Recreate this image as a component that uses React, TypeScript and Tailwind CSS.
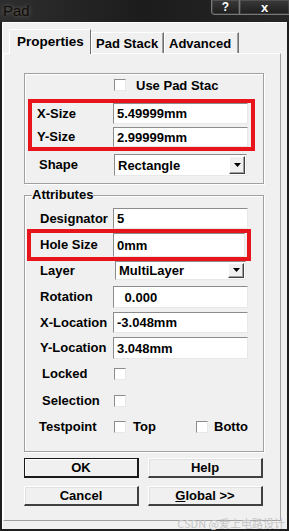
import React from "react";

function Field({ value, className = "" }: { value: string; className?: string }) {
  return (
    <div
      className={`h-full bg-white border-t border-l border-[#8c8c8c] border-r border-b border-r-[#e8e8e8] border-b-[#e8e8e8] flex items-center pl-[3px] whitespace-pre leading-none ${className}`}
    >
      {value}
    </div>
  );
}

function Combo({ value, className = "" }: { value: string; className?: string }) {
  return (
    <div
      className={`h-full bg-white border-t border-l border-[#8c8c8c] border-r border-b border-r-[#e8e8e8] border-b-[#e8e8e8] flex items-center ${className}`}
    >
      <span className="flex-1 pl-[3px] leading-none">{value}</span>
      <div className="w-[16px] self-stretch my-[1px] mr-[1px] bg-[#f0f0f0] border-t border-l border-white border-r border-b border-r-[#404040] border-b-[#404040] shadow-[inset_-1px_-1px_0_#a0a0a0] flex items-center justify-center">
        <svg width="7" height="5" viewBox="0 0 7 5">
          <path d="M0 0h7L3.5 4z" fill="#000" />
        </svg>
      </div>
    </div>
  );
}

function Check() {
  return (
    <div className="w-[12px] h-[12px] shrink-0 bg-white border-t border-l border-[#8c8c8c] border-r border-b border-r-[#e8e8e8] border-b-[#e8e8e8]" />
  );
}

function Btn({ children, main = false }: { children: React.ReactNode; main?: boolean }) {
  return (
    <div
      className={`w-[115px] h-[20px] flex items-center justify-center bg-[#f0f0f0] leading-none ${
        main
          ? "border border-[#1a1a1a] border-r-2 border-b-2 shadow-[inset_1px_1px_0_#fff]"
          : "border-t border-l border-white border-r-2 border-b-2 border-r-[#404040] border-b-[#404040] shadow-[inset_1px_1px_0_#e0e0e0]"
      }`}
    >
      {children}
    </div>
  );
}

export default function App() {
  return (
    <div className="w-[289px] h-[531px] bg-[#1e1e1e] relative overflow-hidden font-['Liberation_Sans',Arial,sans-serif] text-[13px] font-bold text-black">
      {/* title bar */}
      <div className="h-[22px] flex items-start justify-between bg-gradient-to-r from-[#2e2e2e] via-[#1c1c1c] to-[#262626]">
        <span className="ml-[3px] mt-[2px] text-[15px] font-normal text-[#140c06] leading-[17px] [text-shadow:0_0_5px_rgba(255,255,255,0.35)] font-['Liberation_Sans',sans-serif]">
          Pad
        </span>
        <div className="flex h-[15px]">
          <div className="w-[29px] h-full border border-t-0 border-[#777] rounded-bl-[4px] bg-gradient-to-b from-[#3a3a3a] to-[#1e1e1e] shadow-[inset_0_0_0_1px_rgba(255,255,255,0.12)] flex items-center justify-center text-white text-[12px] leading-[12px]">
            ?
          </div>
          <div className="w-[49px] h-full border-b border-[#777] bg-gradient-to-b from-[#3a3a3a] to-[#1e1e1e] shadow-[inset_0_0_0_1px_rgba(255,255,255,0.12)] flex items-center justify-center text-white text-[13px] leading-[13px]">
            x
          </div>
        </div>
      </div>

      {/* client */}
      <div className="mx-[2px] h-[507px] bg-[#f0f0f0] border-t border-l border-white flex flex-col">
        {/* tabs */}
        <div className="mt-[6px] h-[24px] flex items-end pl-[6px]">
          <div className="w-[82px] h-[25px] -mb-px relative z-10 bg-[#f0f0f0] border-t border-l border-white border-r border-r-[#707070] rounded-tl-[2px] flex items-start pt-[5px] pl-[7px] text-[13.5px] leading-[13px]">
            Properties
          </div>
          <div className="w-[73px] h-[21px] bg-[#f0f0f0] border-t border-l border-white border-r border-r-[#707070] shadow-[inset_-1px_0_0_#a0a0a0] flex items-center pl-[4px] leading-none">
            Pad Stack
          </div>
          <div className="w-[75px] h-[21px] bg-[#f0f0f0] border-t border-l border-white border-r border-r-[#707070] shadow-[inset_-1px_0_0_#a0a0a0] flex items-center pl-[4px] leading-none">
            Advanced
          </div>
        </div>

        {/* panel */}
        <div className="w-[278px] h-[468px] border-t border-l border-white border-r border-b border-r-[#a0a0a0] border-b-[#a0a0a0] flex flex-col">
          {/* group 1 */}
          <div className="mt-[19px] ml-[20px] w-[240px] h-[111px] border border-[#a0a0a0] shadow-[inset_1px_1px_0_#fff,1px_1px_0_#fff] flex flex-col">
            <div className="mt-[5px] h-[12px] flex items-center">
              <div className="ml-[89px]">
                <Check />
              </div>
              <span className="ml-[10px] whitespace-nowrap leading-[15px]">Use Pad Stac</span>
            </div>
            <div className="mt-[8px] ml-[3px] w-[227px] h-[52px] border-4 border-[#e8141c] flex flex-col">
              <div className="h-[21px] flex items-center">
                <span className="pl-[5px] w-[81px]">X-Size</span>
                <Field value="5.49999mm" className="w-[135px]" />
              </div>
              <div className="mt-[3px] h-[20px] flex items-center">
                <span className="pl-[5px] w-[81px]">Y-Size</span>
                <Field value="2.99999mm" className="w-[135px]" />
              </div>
            </div>
            <div className="mt-[3px] h-[22px] flex items-center">
              <span className="ml-[14px] w-[75px]">Shape</span>
              <Combo value="Rectangle" className="w-[133px]" />
            </div>
          </div>

          {/* group 2 */}
          <div className="mt-[11px] ml-[20px] w-[240px] h-[257px] border border-[#a0a0a0] shadow-[inset_1px_1px_0_#fff,1px_1px_0_#fff] flex flex-col">
            <span className="-mt-[9px] ml-[7px] self-start bg-[#f0f0f0] h-[15px] leading-[15px]">Attributes</span>
            <div className="mt-[6px] h-[21px] flex items-center">
              <span className="ml-[15px] w-[73px]">Designator</span>
              <Field value="5" className="w-[135px]" />
            </div>
            <div className="ml-[2px] w-[224px] h-[32px] border-4 border-[#e8141c] flex items-center">
              <span className="pl-[9px] w-[82px]">Hole Size</span>
              <Field value="0mm" className="w-[132px] h-[23px]" />
            </div>
            <div className="h-[19px] flex items-center">
              <span className="ml-[15px] w-[75px]">Layer</span>
              <Combo value="MultiLayer" className="w-[131px]" />
            </div>
            <div className="mt-[6px] h-[22px] flex items-center">
              <span className="ml-[15px] w-[73px]">Rotation</span>
              <Field value=" 0.000" className="w-[135px] pl-[7px]" />
            </div>
            <div className="mt-[4px] h-[21px] flex items-center">
              <span className="ml-[15px] w-[73px]">X-Location</span>
              <Field value="-3.048mm" className="w-[135px]" />
            </div>
            <div className="mt-[4px] h-[22px] flex items-center">
              <span className="ml-[15px] w-[73px]">Y-Location</span>
              <Field value="3.048mm" className="w-[135px]" />
            </div>
            <div className="mt-[9px] h-[12px] flex items-center">
              <span className="ml-[17px] w-[72px]">Locked</span>
              <Check />
            </div>
            <div className="mt-[15px] h-[12px] flex items-center">
              <span className="ml-[17px] w-[72px]">Selection</span>
              <Check />
            </div>
            <div className="mt-[14px] h-[12px] flex items-center">
              <span className="ml-[14px] w-[75px]">Testpoint</span>
              <Check />
              <span className="ml-[7px] w-[63px]">Top</span>
              <Check />
              <span className="ml-[6px] whitespace-nowrap">Botto</span>
            </div>
          </div>

          {/* buttons */}
          <div className="mt-[6px] ml-[20px] flex gap-[9px]">
            <Btn main>OK</Btn>
            <Btn>Help</Btn>
          </div>
          <div className="mt-[8px] ml-[20px] flex gap-[9px]">
            <Btn>Cancel</Btn>
            <Btn>
              <span className="underline">G</span>lobal &gt;&gt;
            </Btn>
          </div>
        </div>
      </div>

      {/* watermark */}
      <span className="absolute right-[4px] bottom-[1px] text-[11px] font-normal leading-[13px] text-[#c4c4c4] font-['Noto_Sans_CJK_SC',sans-serif]">
        CSDN @爱上电路设计
      </span>
    </div>
  );
}
